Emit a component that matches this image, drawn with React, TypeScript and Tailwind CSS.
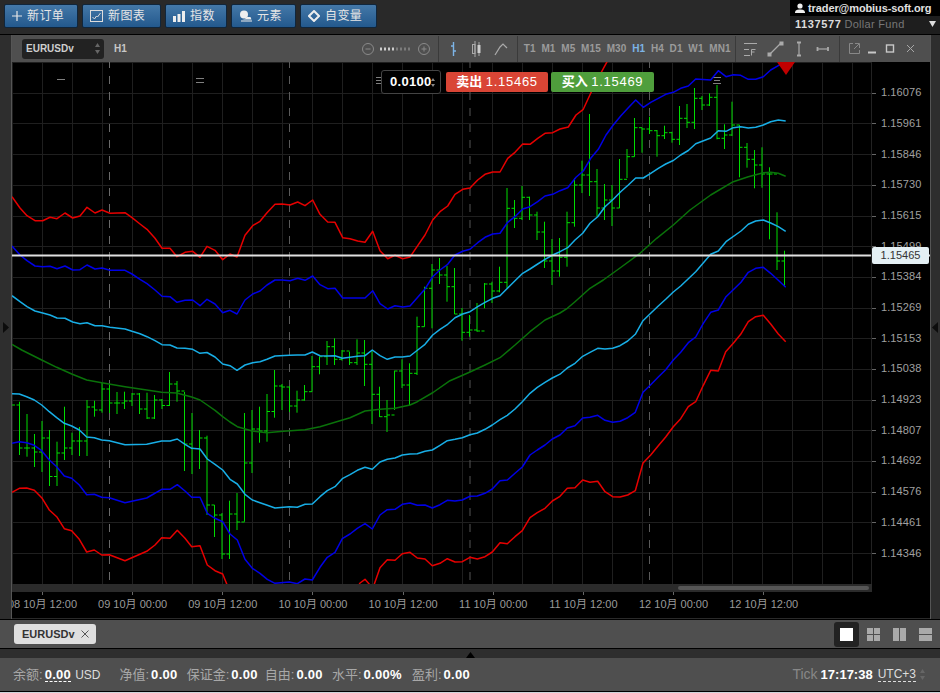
import React from "react";

const redUp = "12,196.7 20,208 27,215.7 35,220.7 42.7,220.7 50,217.3 57,218.7 65,213 72.7,218 80,216 87,207.3 95,213 102,210 110,213.3 125,212.7 132,217.7 140,224 147,229.3 155,238.3 162,248.3 170,248.3 177,256.7 185,252.3 192.7,251.3 200,257.3 207,246.3 215,250.3 222.7,259.7 230,254 237,257 245,235.3 252.7,225.7 260,221.3 267,212.7 275,204.3 282,204 290,205 297.7,202 305,205.7 312.7,200 320,214.3 327.7,222 335,222.3 342.7,237.7 350,238.7 357.7,241 365,242.3 372.7,231.3 380,250.7 387.7,258.7 395,255.3 402.7,258.7 410,257 417.7,245.7 425,235 432.7,220 440,211.7 447.7,206 455,194.3 462.7,189.3 470,188 477.7,180 485,174.3 492.7,172 500,172 507.7,158.3 515,152.3 522.7,144 530,144.3 537.7,138.3 545,133.3 552.7,132.7 560,129 568.3,127 576,115 583.3,109.3 590.7,93.3 598,78.3 608,60";
const blueUp = "12,246 20,255 27,260.7 35,266 42.7,266.7 50,266.3 57,268.7 65,266 72.7,270 80,269.7 87,265 95,269 102,268 110,270.3 125,270.3 132,274 140,279.3 147,283.7 155,290 162,296.3 170,296.7 177,302.3 185,300.3 192.7,300 200,305.7 207,299.3 215,304 222.7,312.7 230,310.3 237,314 245,300 252.7,294 260,291 267,285 275,280 282,280 290,280.7 297.7,278.3 305,280.3 312.7,276 320,284.7 327.7,288.7 335,288.3 342.7,298 365,298 372.7,290.7 380,303.7 387.7,309 395,305.7 402.7,307 410,306 417.7,297.3 425,289 432.7,276.7 440,270 447.7,264.3 455,255 462.7,251.3 470,249.3 477.7,242.7 485,237.3 492.7,234 500,233.3 507.7,222.3 515,216.7 522.7,209 530,206.7 537.7,201.7 545,196 552.7,194.3 560,190.7 567.7,187.7 576,177.3 583.3,171 590.7,158.3 598.3,149.3 606,135 613.3,125 620.7,116 628.3,107.7 635.7,100 643.3,107.3 650.7,102.3 658.3,98.3 665.7,94.3 673.3,92.3 680.7,88.3 688.3,86 695.7,79 710.7,80 718.3,70.7 726,76.7 733.3,74.7 740.7,75.3 748.3,79.3 755.7,79.3 763.3,76.7 770.7,70 778.3,65.7 785,62";
const cyanUp = "12,295.7 20,301.7 27,306.7 35,311 42.7,313 50,315 57,318 65,318.3 72.7,322 80,323.7 87,322.7 95,325.7 102,325.7 110,327.3 125,329 132,331.3 140,333.7 147,336.7 155,340.7 162,344.7 170,345 177,348 185,348.3 192.7,349.3 200,353.3 207,352.5 215,357 222.7,364 230,365.7 237,370.3 245,365 252.7,362.7 260,361.7 267,359.3 275,356 289.3,355.3 297.3,355 305,355 312.3,352 320,355.7 327.3,356 335,355.7 342.3,358.3 350,357.3 357.3,356.3 365,355.7 372.3,350 380,355.7 387.3,359.3 395,357 402.3,357 410,356 417.7,350 425,344.3 432.7,335 440,329.3 447.7,324.3 455,317.7 462.7,314 470,311.7 477.7,306.7 485,302.3 492.7,298.3 500,295.7 507.7,288 515,280.7 522.7,273.3 530,269 537.7,264 545,259.3 552.7,255 560,251.7 567.7,247.7 575,240 582.7,233.3 590,223.3 597.7,216.7 605,206.7 613.3,199.3 620.7,191.7 628.3,185 635.7,178 643.3,178 650.7,173.3 658.3,168.3 665.7,164 673.3,160.5 680.7,155 688.3,150.5 695.7,143.7 710.7,138 718.3,130.7 726,131.3 733.3,127.7 740.7,126.7 748.3,128 755.7,127.3 763.3,125 770.7,121.7 778.3,120 785.7,121";
const green = "12,344.3 21.7,350 41.7,360 56.7,367.3 71.7,374 86.7,380 101.7,382.7 125,386.7 146.7,390 161.7,392.3 176.7,393 191.7,397 200,400 207.3,405 215,410.3 222.7,416.7 230,422 237.3,426.7 252.3,431 266.7,432.7 283.3,431.3 305,429.7 320,426.7 335,422.3 350,417.7 365,411 380,409.3 395,408.3 410,405 417.3,401.7 433,392.5 450,380.7 470,372 485,365 500,357.7 515,345 530,331.7 545,320 560,313 567.3,308.3 575,301.7 590,288.3 603.3,280 620,268 640,253.3 656.7,238.3 673.3,225 690,210 710.7,195 733.3,181.7 748.3,176.7 763.3,172.7 770.7,172.3 778.3,173.3 785.7,176.3";
const cyanDn = "12,393.7 19.3,394 26.7,396.7 34.3,400 41.7,405 49.3,411.7 56.7,417.7 64.3,423.3 71.7,426 79.3,430 86.7,437 94.3,437.7 101.7,440 109.3,440.7 125,444.7 146.7,444.3 161.7,441 170,441 177.3,439 185,444.3 191.7,448.3 200,449 207.3,459 215,464.3 222.7,470 230,479.3 237.3,484 245,494.3 252.3,500 260,502.7 267.3,505.3 275,508 289.3,506.7 297.3,507.3 305,504.3 312.3,504 320,496.7 327.3,490.7 335,486.7 342.3,478.7 350,474.7 357.3,470.3 365,467.3 372.3,469.3 380,462 387.3,459.3 395,458 402.3,455 410,454 417.3,453.7 425,451.3 432.3,450 440,445.3 447.3,440.7 455,439.3 462.3,437.7 470,434.7 477.3,433 485,429.3 492.3,425 500,419.7 507.3,415.3 515,409 522.3,401.7 530,393.3 537.3,387.3 545,382.3 552.3,378 560,374.2 567.3,368 575,363.3 582.7,356.3 590,352.3 597.7,348.3 605,349 612.7,348.3 620,345.7 627.7,341 635.3,334.3 643,320.7 650.7,313.3 658.3,306 665.7,299.3 673.3,292 680.7,286 695.7,271.7 710.7,254.3 718.3,251 726,241.7 741,231 748.3,224.3 755.7,221 763.3,220 770.7,223 778.3,226.7 785.7,231.3";
const blueDn = "12,443.3 19.3,441.7 26.7,442.7 34.3,445.3 41.7,450.7 49.3,460 56.7,466.7 64.3,476 71.7,478.3 79.3,485 86.7,494.7 94.3,494.3 101.7,497.3 109.3,497.7 125,502.7 146.7,498 161.7,489.3 170,489.3 177.3,484.7 185,491 191.7,497.3 200,497.3 207.3,513.3 215,518.3 222.7,521.7 230,534 237.3,540 245,559.3 252.3,568.3 260,573.3 267.3,579.3 275,583.3 289.3,582 297.3,583.7 305,579 312.3,580 320,567.3 327.3,557.3 335,552.3 342.3,538.7 350,534 357.3,528.3 365,523.7 372.3,529 380,515 387.3,509.7 395,509.3 402.3,504.3 410,503 417.3,505.3 425,505 432.3,508 440,504.7 447.3,500.3 455,501 462.3,500 470,496.3 477.3,496 485,493.3 492.3,489 500,480.7 507.3,480 515,473.3 522.3,467 530,455 537.3,450 545,445 552.3,439 560,435 567.3,428 575,425.8 582.7,418 590,417.3 597.7,415.3 605,420.3 612.7,422.3 620,421.3 627.7,417.7 635.3,412.3 643,392.3 650.7,384.7 658.3,377 665.7,369.7 673.3,360 680.7,352.3 688.3,342.7 695.7,337 703.3,323.3 710.7,312.3 718.3,310 726,296.7 741,282.3 748.3,272.3 755.7,268.3 763.3,267.3 770.7,273.3 778.3,280.3 785.7,287.3";
const redDn = "12,492.3 19.3,488.3 26.7,488 34.3,490.3 41.7,497.7 49.3,510 56.7,516.7 64.3,528.7 71.7,530.7 79.3,539.3 86.7,552 94.3,550 101.7,555 109.3,554.7 125,560.7 146.7,551.3 155,545 161.7,537.7 170,538.3 177.3,530.3 185,538.3 191.7,546.7 200,545.7 207.3,565 215,570.7 222.7,574 230,592 355,592 360,583 365,579.3 370,585 374,585 380,567.7 387.3,559.7 395,560.3 402.3,553.7 410,552.3 417.3,558 425,559 432.3,565.7 440,563.3 447.3,558.7 455,562 462.3,561.7 470,557.3 477.3,559 485,556.7 492.3,552 500,542.7 507.3,543.7 515,536.7 522.3,530.7 530,517.7 537.3,512.7 545,508.3 552.3,501 560,496.3 567.3,488.2 575,487.7 582.7,480 590,482.2 597.7,481.3 605,491.7 612.7,496.7 620,497 627.7,495 635.3,490.7 643,463 650.7,455 658.3,445.7 665.7,437 673.3,426.7 680.7,418.7 688.3,406.7 695.7,401.7 703.3,385.3 710.7,370.3 718.3,371 725.7,351.7 733.3,343.3 740.7,334.3 748.3,321.7 755.7,316.7 763.3,315.3 770.7,324 778.3,334 785.7,341.7";

const hi = [405,401.7,414,434,421,430,441.7,406.7,432.7,427,400,400.7,383,384,392,391.7,393,393,392.7,395,399,372,381,392,413,430,435.7,505,513,500.7,493,413,410,406.7,394,370,384,386.7,390.7,385,356,356.7,341,338.3,350,351.7,339.3,340,350,386.7,400,370.7,359.3,363.3,316.7,286.7,264,258,266,268,308,315,303,283,281.7,266.7,188,200,186,196.7,211.7,221.7,239,238,211.7,178,160.7,114,169,184,185,159,149,118,127.7,116.7,130,125.7,131.7,106,104,88,96,93.3,85,124.3,101.7,125,143,150,147.3,167.3,212.3,250.7];
const lo = [405,455,456.7,467,472,486,486,460,455,456,456,416.7,412.7,413,414,409,406,414,419,419,409,406,401.7,471,474,469,515,537,559,559,530,521.7,473,442.7,441.7,417.7,410,412,412.7,400.7,391.7,374.3,365,365,360.7,365,365,386,424,417,432,410,388,405,375,326.7,328.3,284,301.7,314,340.7,336.7,331.7,308.3,303,292.3,288,228,220,220,240,268,285,276.7,266.7,226.7,193,196,216.7,220,226,208,178,156.7,152.7,134,156.7,139,142.7,145,128,129,110,106,139.3,149,136,177.3,167.7,188.3,187.7,239.3,270,286.7];
const cl = [405,448,448,452,438,476.5,453,448,441,441,407,410,389,403,403,401,394,409,418,400,405.5,384,391,444,448.5,438,505,515,554,514,522,463,429,431,411.5,386,387,406,400,391.7,366.7,356.7,346.7,359.3,351,362.7,353,364.3,394.3,416.7,415,371,385,373.3,326.7,288.3,270,275,286.7,314,332.3,330,331,284,291,282.3,208.3,218.3,197.3,215,232,261,271,257.3,222.7,185,175,181.7,208,200,208,179.3,156.7,127.7,129,130.7,135.7,132.7,139.3,118.3,122.3,98.3,105,97.3,138.3,135,125,147.3,159.3,165,174,174,261];

const hGrid = Array.from({ length: 17 }, (_, i) => Math.round(553 - i * 30.68) + 0.5);
const vGrid = Array.from({ length: 29 }, (_, i) => 12.5 + i * 30);
const prices = ["1.14346","1.14461","1.14576","1.14692","1.14807","1.14923","1.15038","1.15153","1.15269","1.15384","1.15499","1.15615","1.15730","1.15846","1.15961","1.16076"];
const times = ["08 10月 12:00","09 10月 00:00","09 10月 12:00","10 10月 00:00","10 10月 12:00","11 10月 00:00","11 10月 12:00","12 10月 00:00","12 10月 12:00"];
const frames = ["T1","M1","M5","M15","M30","H1","H4","D1","W1","MN1"];

function Chart() {
  return (
    <svg viewBox="12 62 918 556" className="block w-[918px] h-[556px]">
      <defs>
        <clipPath id="plot"><rect x="12" y="62" width="860" height="522" /></clipPath>
      </defs>
      <rect x="12" y="62" width="918" height="556" fill="#000" />
      <g stroke="#1f1f1f" strokeWidth="1">
        {hGrid.map((y) => <line key={y} x1="12" x2="872" y1={y} y2={y} />)}
        {vGrid.map((x) => <line key={x} x1={x} x2={x} y1="62" y2="584" />)}
      </g>
      <g strokeDasharray="8 8" strokeWidth="1" clipPath="url(#plot)">
        <line x1="109.5" x2="109.5" y1="60" y2="584" stroke="#6a6a6a" />
        <line x1="289.5" x2="289.5" y1="60" y2="584" stroke="#5a5a5a" />
        <line x1="470" x2="470" y1="60" y2="584" stroke="#555" />
        <line x1="649.5" x2="649.5" y1="60" y2="584" stroke="#5a5a5a" />
      </g>
      <g stroke="#808080" strokeWidth="1">
        <line x1="57" x2="65" y1="79.5" y2="79.5" />
        <line x1="196" x2="204" y1="78.5" y2="78.5" />
        <line x1="196" x2="204" y1="82.5" y2="82.5" />
        <line x1="376" x2="381" y1="77.5" y2="77.5" />
        <line x1="376" x2="381" y1="80.5" y2="80.5" />
        <line x1="376" x2="381" y1="83.5" y2="83.5" />
        <line x1="713" x2="721" y1="77.5" y2="77.5" />
        <line x1="714" x2="720" y1="80.5" y2="80.5" />
        <line x1="713" x2="721" y1="83.5" y2="83.5" />
      </g>
      <g clipPath="url(#plot)">
        <g stroke="#00dc00" strokeWidth="1" fill="none">
          {hi.map((h, k) => {
            const x = 12 + 7.5 * k;
            return (
              <g key={k}>
                <line x1={x} x2={x} y1={h} y2={lo[k]} />
                <line x1={x} x2={x + 3} y1={cl[k]} y2={cl[k]} />
                {k < 103 && <line x1={x + 4.5} x2={x + 7.5} y1={cl[k]} y2={cl[k]} />}
              </g>
            );
          })}
        </g>
        <g fill="none" strokeWidth="1.5" strokeLinejoin="round">
          <polyline points={green} stroke="#0a720a" />
          <polyline points={cyanUp} stroke="#18aee6" />
          <polyline points={cyanDn} stroke="#18aee6" />
          <polyline points={blueUp} stroke="#0000e6" />
          <polyline points={blueDn} stroke="#0000e6" />
          <polyline points={redUp} stroke="#e60000" />
          <polyline points={redDn} stroke="#e60000" />
        </g>
        <polygon points="777,62 795,62 786,75" fill="#c00000" />
      </g>
      <line x1="12" x2="930" y1="255.5" y2="255.5" stroke="#e0e0e0" strokeWidth="2" />
      <line x1="871.5" x2="871.5" y1="62" y2="592" stroke="#222" />
      <rect x="12" y="584" width="860" height="8" fill="#2b2b2b" />
      <rect x="678" y="586" width="191" height="4" rx="2" fill="#565656" />
      <g stroke="#666">
        {hGrid.slice(0, 16).map((y) => <line key={y} x1="872" x2="876" y1={y} y2={y} />)}
        {times.map((_, i) => { const x = Math.round(42 + i * 90.15) + 0.5; return <line key={i} x1={x} x2={x} y1="592" y2="595" />; })}
      </g>
      <g fill="#a0a0a0" fontSize="11" letterSpacing="0.1">
        {prices.map((p, i) => <text key={p} x="881" y={553 - i * 30.68 + 3.5}>{p}</text>)}
      </g>
      <svg x="12" y="592" width="860" height="26" viewBox="12 592 860 26">
        <g fill="#9a9a9a" fontSize="11" textAnchor="middle">
          {times.map((t, i) => <text key={t} x={42.5 + i * 90.15} y="608">{t}</text>)}
        </g>
      </svg>
    </svg>
  );
}

function TopBtn({ w, icon, label }: { w: string; icon: React.ReactNode; label: string }) {
  return (
    <button className={`${w} h-[24px] flex items-center gap-[5px] pl-[7px] rounded-[2px] border border-[#10263c] bg-gradient-to-b from-[#4478a8] to-[#23598d] text-[#e6e6e6] text-[12px] tracking-[0.4px]`}>
      {icon}
      <span>{label}</span>
    </button>
  );
}

function Sep() {
  return <div className="w-px h-[26px] bg-[#3a3a3a]" />;
}

export default function App() {
  return (
    <div className="w-[940px] h-[693px] overflow-hidden flex flex-col bg-[#2a2a2a] font-['Liberation_Sans','Noto_Sans_CJK_SC',sans-serif]">
      <header className="h-[35px] flex justify-between border-b border-black bg-[#292929]">
        <div className="flex gap-[4px] pl-[4px] pt-[4px]">
          <TopBtn w="w-[74px]" label="新订单" icon={<svg width="10" height="10" viewBox="0 0 10 10"><path d="M5 0v10M0 5h10" stroke="#e6e6e6" strokeWidth="1.2" /></svg>} />
          <TopBtn w="w-[79px]" label="新图表" icon={<svg width="13" height="12" viewBox="0 0 13 12" fill="none"><rect x="0.5" y="0.5" width="12" height="11" stroke="#ddd" /><path d="M2.5 7l2 2 2-3 1 1 3-4" stroke="#ddd" /></svg>} />
          <TopBtn w="w-[62px]" label="指数" icon={<svg width="12" height="11" viewBox="0 0 12 11" fill="#eee"><rect x="0" y="5" width="3" height="6" /><rect x="4.5" y="3" width="3" height="8" /><rect x="9" y="0" width="3" height="11" /></svg>} />
          <TopBtn w="w-[65px]" label="元素" icon={<svg width="13" height="12" viewBox="0 0 13 12" fill="#eee"><circle cx="5" cy="4.5" r="4" /><path d="M3 9.5h9.5l-1-2.5h-3.5q-2 2.5-5 2.5zM2 10.5h11v1H2z" /></svg>} />
          <TopBtn w="w-[77px]" label="自变量" icon={<svg width="12" height="12" viewBox="0 0 12 12" fill="none"><path d="M6 1l5 5-5 5-5-5z" stroke="#eee" strokeWidth="2" /></svg>} />
        </div>
        <div className="w-[150px] flex flex-col bg-black">
          <div className="h-[16px] flex items-center gap-[3px] pl-[5px] text-[#e0e0e0] text-[11px] font-bold tracking-[-0.1px]">
            <svg width="10" height="10" viewBox="0 0 10 10" fill="#eee"><circle cx="5" cy="3" r="2.6" /><path d="M0 10c0-3 2-3.5 5-3.5s5 .5 5 3.5z" /></svg>
            <span>trader@mobius-soft.org</span>
          </div>
          <div className="h-[18px] flex items-center pl-[5px] pr-[3px] bg-[#1e1e1e] text-[11px] pb-[2px]">
            <span className="font-bold text-[#ddd] tracking-[0.6px]">1137577</span>
            <span className="ml-[3px] text-[#777] tracking-[0.3px]">Dollar Fund</span>
            <svg className="ml-auto mr-[1px]" width="7" height="6" viewBox="0 0 7 6" fill="#ddd"><path d="M0 0h7L3.5 6z" /></svg>
          </div>
        </div>
      </header>

      <div className="h-[584px] flex">
        <aside className="w-[12px] flex items-center border-r border-[#555] bg-[#2e2e2e] pl-[3px]">
          <svg width="6" height="11" viewBox="0 0 6 11" fill="#0c0c0c"><path d="M0 0l6 5.5L0 11z" /></svg>
        </aside>
        <div className="w-[918px] flex flex-col">
          <div className="h-[27px] flex items-center bg-[#4f4f4f] text-[10px] font-bold text-[#9b9b9b]">
            <div className="ml-[10px] w-[82px] h-[20px] flex items-center justify-between px-[4px] rounded-[3px] bg-[#222] text-[#cfcfcf]">
              <span>EURUSDv</span>
              <svg width="5" height="11" viewBox="0 0 5 11" fill="#666"><path d="M2.5 0L5 4H0zM2.5 11L0 7h5z" /></svg>
            </div>
            <span className="ml-[10px] text-[#c8c8c8]">H1</span>
            <svg className="ml-[234px]" width="70" height="14" viewBox="0 0 70 14" fill="none">
              <circle cx="7" cy="7" r="5.5" stroke="#8a8a8a" /><path d="M4.5 7h5" stroke="#8a8a8a" />
              <path d="M20 5.5v3M24 5.5v3M28 5.5v3M32 5.5v3" stroke="#eee" strokeWidth="1.6" />
              <path d="M36 5.5v3M40 5.5v3M44 5.5v3M48 5.5v3" stroke="#888" strokeWidth="1.6" />
              <circle cx="63" cy="7" r="5.5" stroke="#8a8a8a" /><path d="M60.5 7h5M63 4.5v5" stroke="#8a8a8a" />
            </svg>
            <div className="ml-[7px]"><Sep /></div>
            <svg className="ml-[9px]" width="65" height="18" viewBox="0 0 65 18" fill="none">
              <path d="M5.5 2v14M3 6h2.5M5.5 11H8" stroke="#7db4e6" strokeWidth="1.4" />
              <path d="M27 1v16" stroke="#aaa" /><rect x="24.5" y="4.5" width="2.5" height="9" stroke="#aaa" /><path d="M31 2v14" stroke="#aaa" /><rect x="29.5" y="5" width="3" height="8" fill="#ccc" />
              <path d="M47 15l5-8 3-3 4 4" stroke="#aaa" strokeWidth="1.2" />
            </svg>
            <div className="ml-[4px]"><Sep /></div>
            <div className="ml-[6px] w-[207px] flex justify-between tracking-[0.1px]">
              {frames.map((f) => <span key={f} className={f === "H1" ? "text-[#7db4e6]" : ""}>{f}</span>)}
            </div>
            <div className="ml-[4px]"><Sep /></div>
            <svg className="ml-[6px]" width="92" height="18" viewBox="0 0 92 18" fill="none" stroke="#aaa">
              <path d="M2 3.5h13M2 9.5h5M2 15.5h6" /><path d="M9.5 15.5V9.5h4M9.5 12h3" />
              <path d="M28 14L39 3" strokeWidth="1.2" /><rect x="26" y="13" width="3" height="3" fill="#aaa" /><rect x="38" y="2" width="3" height="3" fill="#aaa" />
              <path d="M57 3v12" strokeWidth="1.2" /><path d="M55 2.5h4M55 15.5h4" strokeWidth="1.8" />
              <path d="M75 9h11" strokeWidth="1.2" /><path d="M75.5 7v4M86 7v4" strokeWidth="1.8" />
            </svg>
            <div className="ml-[5px]"><Sep /></div>
            <svg className="ml-[8px]" width="78" height="14" viewBox="0 0 78 14" fill="none" stroke="#888">
              <path d="M5 1.5H1.5v10h10V8M7 1.5h4.5V6M11 2L6 7" />
              <path d="M20 10.5h8" stroke="#c8c8c8" strokeWidth="2" />
              <rect x="38.5" y="3" width="7" height="7" stroke="#c8c8c8" strokeWidth="1.4" />
              <path d="M59 3l7 7M66 3l-7 7" stroke="#a8a8a8" />
            </svg>
          </div>
          <div className="relative">
            <Chart />
            <div className="absolute left-[369px] top-[8px] flex items-center">
              <div className="w-[60px] h-[24px] flex items-center pl-[8px] rounded-[3px] border border-[#444] bg-black text-white text-[13px] font-bold tracking-[0.3px]">
                <span>0.0100</span>
                <svg className="ml-[-1px]" width="4" height="9" viewBox="0 0 4 9" fill="#888"><path d="M2 0l2 3H0zM2 9L0 6h4z" /></svg>
              </div>
              <button className="ml-[5px] w-[102px] h-[20px] rounded-[2px] bg-[#d94535] text-white text-[13px] font-bold">卖出 <span className="font-normal tracking-[0.7px]">1.15465</span></button>
              <button className="ml-[3px] w-[103px] h-[20px] rounded-[2px] bg-[#4f9e3c] text-white text-[13px] font-bold">买入 <span className="font-normal tracking-[0.7px]">1.15469</span></button>
            </div>
            <div className="absolute left-[860px] top-[185px] w-[57px] h-[17px] flex items-center justify-center rounded-[2px] bg-[#e4f0f4] text-[#333] text-[11px]">1.15465</div>
          </div>
        </div>
        <aside className="w-[10px] flex items-center justify-end border-l border-[#555] bg-[#2e2e2e] pr-[2px]">
          <svg width="6" height="11" viewBox="0 0 6 11" fill="#0c0c0c"><path d="M6 0L0 5.5 6 11z" /></svg>
        </aside>
      </div>

      <div className="h-[29px] flex items-center justify-between border-t border-black bg-[#4f4f4f] pl-[14px] pr-[8px]">
        <div className="w-[82px] h-[20px] flex items-center gap-[6px] pl-[8px] rounded-[3px] bg-[#dfdfdf] text-[#333] text-[11px] font-bold">
          <span>EURUSDv</span>
          <svg width="8" height="8" viewBox="0 0 8 8" stroke="#555" fill="none"><path d="M.5.5l7 7M7.5.5l-7 7" /></svg>
        </div>
        <div className="flex items-center">
          <div className="w-[25px] h-[25px] flex items-center justify-center rounded-[3px] bg-[#222]"><div className="w-[13px] h-[13px] bg-white" /></div>
          <div className="ml-[8px] w-[13px] h-[13px] grid grid-cols-2 gap-px">
            <div className="bg-[#aaa]" /><div className="bg-[#aaa]" /><div className="bg-[#aaa]" /><div className="bg-[#aaa]" />
          </div>
          <div className="ml-[13px] w-[13px] h-[13px] grid grid-cols-2 gap-px"><div className="bg-[#aaa]" /><div className="bg-[#aaa]" /></div>
          <div className="ml-[13px] w-[13px] h-[13px] grid grid-rows-2 gap-px"><div className="bg-[#aaa]" /><div className="bg-[#aaa]" /></div>
        </div>
      </div>

      <div className="h-[10px] flex justify-center items-end border-t border-black bg-[#2e2e2e]">
        <svg width="9" height="6" viewBox="0 0 9 6" fill="#000"><path d="M4.5 0L9 6H0z" /></svg>
      </div>

      <div className="h-[33px] flex items-center justify-between bg-[#4f4f4f] pl-[13px] pr-[15px] text-[13px] text-[#a8a8a8]">
        <div className="flex items-center">
          <span>余额:</span>
          <b className="ml-[2px] tracking-[0.3px] text-white border-b border-dashed border-white leading-[13px]">0.00</b>
          <span className="ml-[4px] text-[12px] text-[#ddd]">USD</span>
          <span className="ml-[19px]">净值:</span>
          <b className="ml-[2px] tracking-[0.3px] text-white">0.00</b>
          <span className="ml-[9px]">保证金:</span>
          <b className="ml-[2px] tracking-[0.3px] text-white">0.00</b>
          <span className="ml-[7px]">自由:</span>
          <b className="ml-[2px] tracking-[0.3px] text-white">0.00</b>
          <span className="ml-[9px]">水平:</span>
          <b className="ml-[2px] tracking-[0.3px] text-white">0.00%</b>
          <span className="ml-[10px]">盈利:</span>
          <b className="ml-[2px] tracking-[0.3px] text-white">0.00</b>
        </div>
        <div className="flex items-center">
          <span className="text-[14px] text-[#888]">Tick</span>
          <b className="ml-[3px] text-white">17:17:38</b>
          <span className="ml-[5px] text-[12px] text-[#ddd] border-b border-dashed border-[#ddd] leading-[13px]">UTC+3</span>
          <svg className="ml-[4px]" width="5" height="11" viewBox="0 0 5 11" fill="#666"><path d="M2.5 0L5 4H0zM2.5 11L0 7h5z" /></svg>
        </div>
      </div>
      <div className="h-px bg-black" />
      <div className="flex-1 bg-[#cfd4da]" />
    </div>
  );
}
